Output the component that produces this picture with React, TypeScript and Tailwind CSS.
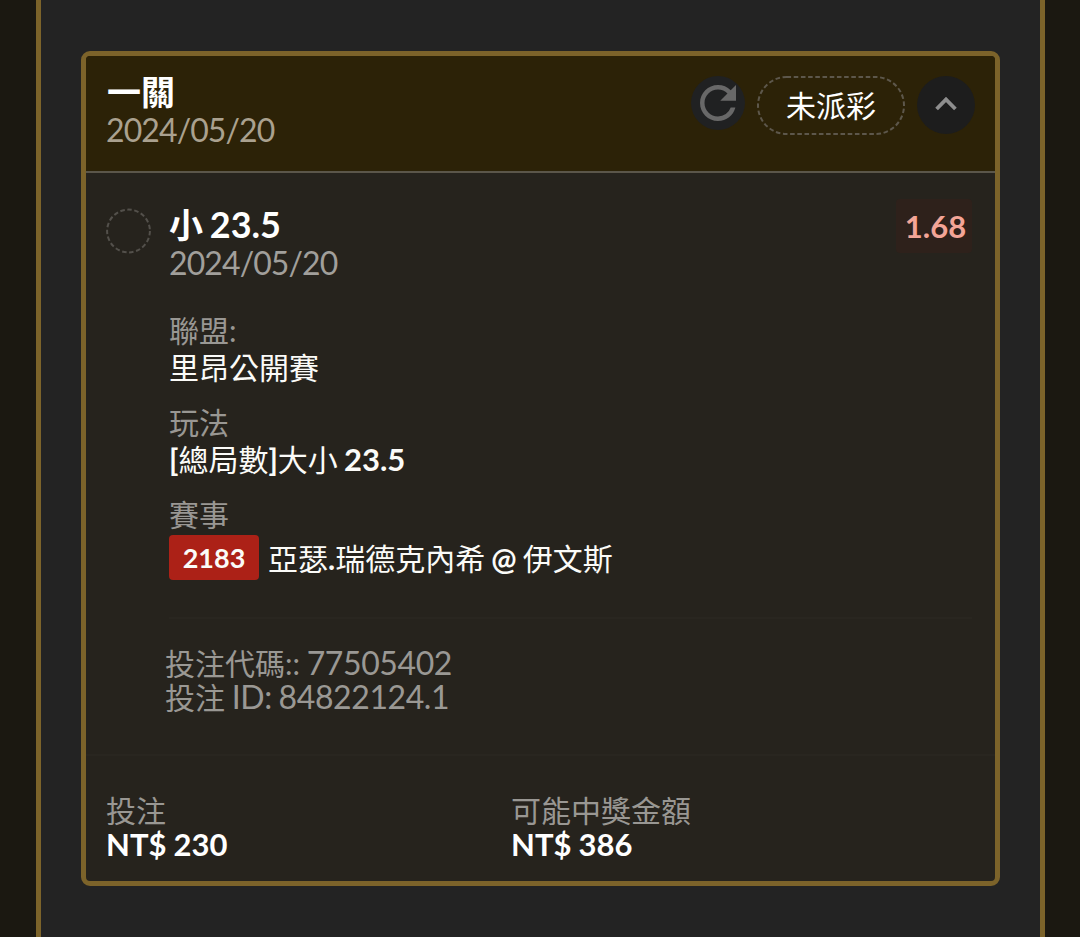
import React from "react";

type Bet = {
  pick: string;
  line: string;
  date: string;
  odds: string;
  league: string;
  eventNo: string;
  code: string;
  id: string;
  stake: number;
  payout: number;
};

const BET: Bet = {
  pick: "小",
  line: "23.5",
  date: "2024/05/20",
  odds: "1.68",
  league: "里昂公開賽",
  eventNo: "2183",
  code: "77505402",
  id: "84822124.1",
  stake: 230,
  payout: 386,
};

function money(n: number) {
  return `NT$ ${n.toLocaleString("en-US")}`;
}

function ReloadIcon() {
  return (
    <svg width="36" height="36" viewBox="4 4 16 16" fill="#686868">
      <path d="M17.65 6.35A7.958 7.958 0 0 0 12 4c-4.42 0-7.99 3.58-7.99 8s3.57 8 7.99 8c3.73 0 6.84-2.55 7.73-6h-2.08A5.99 5.99 0 0 1 12 18c-3.31 0-6-2.69-6-6s2.69-6 6-6c1.66 0 3.14.69 4.22 1.78L13 11h7V4l-2.35 2.35z" />
    </svg>
  );
}

function ChevronUpIcon() {
  return (
    <svg width="22" height="15" viewBox="0 0 22 15" fill="none" className="mb-1">
      <path d="M1.6 13 11 3.4 20.4 13" stroke="#8e8e8e" strokeWidth="3.8" />
    </svg>
  );
}

function CardHeader({ date }: { date: string }) {
  return (
    <div className="flex h-[117px] items-start justify-between border-b-2 border-[#5b564a] bg-[#2c2207] pt-[17px] pr-5 pl-5">
      <div>
        <h2 className="h-[38px] pl-px text-[34px] leading-[38px] font-bold text-white">
          一關
        </h2>
        <div className="text-[32px] leading-[38px] tracking-[-0.9px] text-[#aaa18f]">
          {date}
        </div>
      </div>
      <div className="flex items-start pt-[3px]">
        <button className="mr-3 flex size-[54px] items-center justify-center rounded-full bg-[#202122]">
          <ReloadIcon />
        </button>
        <div className="mr-3 flex h-[59px] w-[148px] items-center justify-center">
          <svg width="148" height="59" className="absolute" fill="none">
            <rect
              x="1"
              y="1"
              width="146"
              height="57"
              rx="28.5"
              stroke="#5d574b"
              strokeWidth="2"
              strokeDasharray="4.6 2.6"
            />
          </svg>
          <span className="-mt-0.5 text-[30px] leading-9 text-white">
            未派彩
          </span>
        </div>
        <button className="flex size-[58px] items-center justify-center rounded-full bg-[#1d1d1d]">
          <ChevronUpIcon />
        </button>
      </div>
    </div>
  );
}

function Field({
  label,
  children,
}: {
  label: string;
  children: React.ReactNode;
}) {
  return (
    <div className="h-[92px]">
      <div className="h-[37px] text-[30px] leading-[37px] text-[#999793]">
        {label}
      </div>
      <div className="flex h-[37px] items-center text-[30px] leading-[37px] whitespace-pre text-[#fbfbf8] [word-spacing:-1.5px]">
        {children}
      </div>
    </div>
  );
}

function Amount({ label, value }: { label: string; value: string }) {
  return (
    <div className="w-[405px]">
      <div className="h-[34px] text-[30px] leading-[34px] text-[#999793]">
        {label}
      </div>
      <div className="text-[31px] leading-[34px] font-bold text-white [word-spacing:-0.5px]">
        {value}
      </div>
    </div>
  );
}

export default function App() {
  return (
    <div className="h-[937px] bg-[#1b1811] px-9 font-['Lato','Noto_Sans_CJK_TC',sans-serif]">
      <div className="h-full w-[1009px] border-x-[5px] border-[#7c632a] bg-[#232323] px-10 pt-[51px]">
        <div className="h-[835px] w-[919px] overflow-hidden rounded-[9px] border-[5px] border-[#7c632a] bg-[#26231d]">
          <CardHeader date={BET.date} />

          {/* Selection */}
          <div className="flex h-[444px] pt-[33px] pr-[23px] pl-5">
            <svg width="45" height="46" fill="none" className="mt-0.5 mr-[18px]">
              <circle
                cx="22.5"
                cy="23"
                r="21.4"
                stroke="#53504b"
                strokeWidth="2"
                strokeDasharray="4.5 2.57"
              />
            </svg>
            <div className="flex-1">
              <div className="flex h-[106px] justify-between">
                <div>
                  <div className="h-[38px] text-[34px] leading-[37px] font-bold text-white [word-spacing:-1.5px]">
                    {BET.pick} <span className="text-[36px]">{BET.line}</span>
                  </div>
                  <div className="text-[32px] leading-[38px] tracking-[-0.9px] text-[#a19f9b]">
                    {BET.date}
                  </div>
                </div>
                <div className="-mt-[7px] flex h-[54px] w-[76px] items-center justify-center rounded bg-[#2e211b] pl-[3px] text-[31px] font-bold text-[#f3a597]">
                  {BET.odds}
                </div>
              </div>

              <Field label="聯盟:">{BET.league}</Field>
              <Field label="玩法">
                <b>[</b>總局數<b>]</b>大小{" "}
                <b className="text-[31px]">{BET.line}</b>
              </Field>
              <Field label="賽事">
                <span className="mt-3 mr-[9px] flex h-[45px] w-[90px] items-center justify-center rounded-[4px] bg-[#ac2117] text-[27px] font-bold">
                  {BET.eventNo}
                </span>
                <span className="mt-[13px]">
                  亞瑟<b>.</b>瑞德克內希 <b>@</b> 伊文斯
                </span>
              </Field>
            </div>
          </div>

          {/* Reference numbers */}
          <div className="mr-[23px] ml-[83px] h-[137px] border-t-2 border-[#292620]">
            <div className="-ml-1 pt-[27px] text-[30px] leading-[34px] text-[#9a9894] [word-spacing:-1px]">
              <div className="h-[34px]">
                投注代碼::{" "}
                <span className="text-[32px] tracking-[-0.4px]">
                  {BET.code}
                </span>
              </div>
              <div className="h-[34px]">
                投注{" "}
                <span className="text-[32px] tracking-[-0.4px]">
                  ID: {BET.id}
                </span>
              </div>
            </div>
          </div>

          <div className="flex border-t-2 border-[#292620] pt-[37px] pl-5">
            <Amount label="投注" value={money(BET.stake)} />
            <Amount label="可能中獎金額" value={money(BET.payout)} />
          </div>
        </div>
      </div>
    </div>
  );
}
